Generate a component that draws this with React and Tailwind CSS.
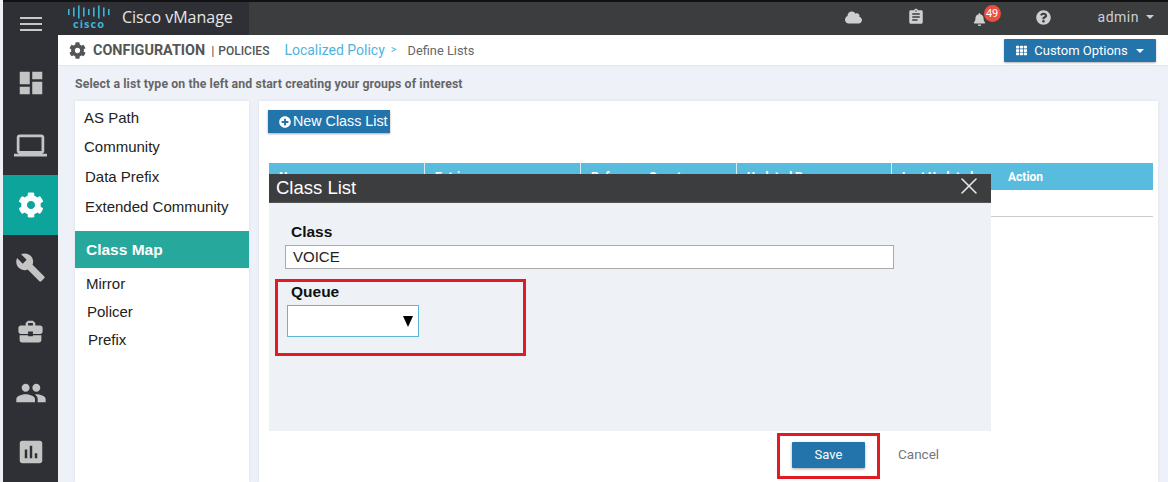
import React from "react";
import { FaCog, FaCloud, FaBell, FaQuestionCircle, FaTh, FaPlusCircle } from "react-icons/fa";
import { MdDashboard, MdLaptop, MdBuild, MdBusinessCenter, MdPeople, MdAssessment, MdAssignment } from "react-icons/md";
import { X } from "lucide-react";

const navItems = [
  { Icon: MdDashboard, h: "h-[58px]", size: 30 },
  { Icon: MdLaptop, h: "h-[63px] pt-[3px]", size: 33 },
  { Icon: FaCog, h: "h-[60px]", size: 26, active: true },
  { Icon: MdBuild, h: "h-[65px]", size: 31 },
  { Icon: MdBusinessCenter, h: "h-[62px]", size: 29 },
  { Icon: MdPeople, h: "h-[61px]", size: 32 },
  { Icon: MdAssessment, h: "h-[59px] pb-[2px]", size: 30 },
];

function CiscoLogo() {
  const bars = [
    [1, 6], [6, 9], [11, 13], [16, 9], [21, 6], [26, 9], [31, 13], [36, 9], [41, 6],
  ];
  return (
    <div className="flex flex-col items-center w-[44px] -mt-[3px]">
      <svg width="44" height="14" viewBox="0 0 44 14">
        {bars.map(([x, h], i) => (
          <rect key={i} x={x} y={(14 - h) / 2} width="1.6" height={h} fill="#3fb3d6" />
        ))}
      </svg>
      <span className="text-[11px] leading-[10px] font-bold tracking-[1px] text-[#3fb3d6] font-['Open_Sans',sans-serif]">cisco</span>
    </div>
  );
}

function ListItem({ children, className }) {
  return <div className={`text-[#222] text-[15px] leading-[18px] ${className}`}>{children}</div>;
}

const columns = [
  ["Name", "w-[156px] border-r border-[#d8eef6]"],
  ["Entries", "w-[156px] border-r border-[#d8eef6]"],
  ["Reference Count", "w-[156px] border-r border-[#d8eef6]"],
  ["Updated By", "w-[155px] border-r border-[#d8eef6]"],
  ["Last Updated", "w-[116px]"],
];

export default function App() {
  return (
    <div className="w-[1168px] h-[482px] overflow-hidden flex bg-[#eef2f8] font-['Liberation_Sans',Arial,sans-serif]">
      <aside className="w-[55px] ml-[3px] shrink-0 bg-[#2f3035] flex flex-col border-t-2 border-[#111]">
        <div className="h-[52px] shrink-0 flex items-center justify-center">
          <div className="flex flex-col gap-[4px] w-[22px] -mt-[8px]">
            <span className="h-[2px] bg-[#c8c8c8]" />
            <span className="h-[2px] bg-[#c8c8c8]" />
            <span className="h-[2px] bg-[#c8c8c8]" />
          </div>
        </div>
        {navItems.map(({ Icon, h, size, active }, i) => (
          <div key={i} className={`${h} shrink-0 flex items-center justify-center ${active ? "bg-[#0da59b] text-white" : "text-[#c4c4c4]"}`}>
            <Icon size={size} />
          </div>
        ))}
      </aside>

      <div className="flex-1 min-w-0 flex flex-col">
        <header className="h-[35px] shrink-0 bg-[#3c3d3f] border-t-2 border-[#111] flex items-center text-[#cfcfcf]">
          <div className="w-[191px] h-full bg-[#2f3035] flex items-center pl-[9px] gap-[11px]">
            <CiscoLogo />
            <span className="text-[16px] leading-[20px] -mt-[4px] text-[#e6e6e6] font-['Open_Sans',sans-serif]">Cisco vManage</span>
          </div>
          <div className="flex-1 flex items-center justify-end pr-[14px] pb-[3px]">
            <FaCloud size={17} className="mr-[45px]" />
            <MdAssignment size={18} className="mr-[48px]" />
            <div className="relative mr-[39px] w-[24px] h-[20px] flex items-center">
              <FaBell size={13} className="mt-[4px]" />
              <span className="absolute left-[11px] -top-[2px] w-[17px] h-[17px] rounded-full bg-[#e8503f] text-white text-[11px] leading-[17px] text-center font-['Roboto',sans-serif]">49</span>
            </div>
            <FaQuestionCircle size={15} className="mr-[47px]" />
            <span className="text-[14px] font-['Roboto',sans-serif] tracking-[0.5px]">admin</span>
            <span className="ml-[7px] w-0 h-0 border-x-[4px] border-x-transparent border-t-[4px] border-t-[#cfcfcf]" />
          </div>
        </header>

        <div className="h-[31px] shrink-0 bg-white border-b border-[#e4e6ea] flex items-center pl-[11px] pr-[12px] pt-[1px] font-['Roboto',sans-serif]">
          <FaCog size={17} className="text-[#555] mr-[7px]" />
          <span className="text-[14.4px] font-bold text-[#555]">CONFIGURATION</span>
          <span className="text-[13px] text-[#555] ml-[6px]">|</span>
          <span className="text-[12px] font-medium text-[#555] ml-[4px]">POLICIES</span>
          <span className="text-[14px] text-[#4fb3dd] ml-[15px]">Localized Policy</span>
          <span className="text-[11px] text-[#4fb3dd] ml-[6px]">&gt;</span>
          <span className="text-[12.8px] text-[#666] ml-[11px]">Define Lists</span>
          <button className="ml-auto w-[152px] h-[23px] bg-[#2274ab] text-white text-[13px] rounded-[1px] shadow-[0_1px_2px_rgba(0,0,0,0.3)] flex items-center justify-center">
            <FaTh size={11} className="mr-[7px]" />
            Custom Options
            <span className="ml-[8px] w-0 h-0 border-x-[4px] border-x-transparent border-t-[4px] border-t-white" />
          </button>
        </div>

        <div className="flex-1 min-h-0 pl-[17px] pr-[10px] flex flex-col">
          <div className="h-[35px] shrink-0 pt-[2px] flex items-center text-[12.3px] font-bold text-[#666] font-['Roboto',sans-serif] tracking-[0.1px]">
            Select a list type on the left and start creating your groups of interest
          </div>
          <div className="flex-1 min-h-0 flex gap-[10px]">
            <nav className="w-[174px] shrink-0 bg-white shadow-[0_0_3px_rgba(0,0,0,0.08)] flex flex-col pt-[8px]">
              <ListItem className="pl-[9px]">AS Path</ListItem>
              <ListItem className="pl-[9px] mt-[11px]">Community</ListItem>
              <ListItem className="pl-[10px] mt-[12px]">Data Prefix</ListItem>
              <ListItem className="pl-[10px] mt-[12px]">Extended Community</ListItem>
              <div className="mt-[15px] h-[37px] bg-[#26a99c] text-white font-bold text-[15.5px] pl-[11px] pt-[1px] flex items-center">Class Map</div>
              <ListItem className="pl-[11px] mt-[7px] text-[14px]">Mirror</ListItem>
              <ListItem className="pl-[12px] mt-[10px] text-[14px]">Policer</ListItem>
              <ListItem className="pl-[13px] mt-[10px] text-[14px]">Prefix</ListItem>
            </nav>

            <main className="relative flex-1 min-w-0 bg-white shadow-[0_0_3px_rgba(0,0,0,0.08)] pt-[9px] pl-[10px] pr-[5px]">
              <button className="w-[122px] h-[23px] ml-[-1px] pl-[11px] bg-[#2274ab] text-white text-[14.3px] shadow-[0_1px_2px_rgba(0,0,0,0.35)] flex items-center">
                <FaPlusCircle size={12} className="mr-[2px]" />
                New Class List
              </button>
              <div className="mt-[30px] h-[27px] bg-[#58bcdf] flex text-white text-[12px] font-bold font-['Roboto',sans-serif]">
                {columns.map(([name, w]) => (
                  <div key={name} className={`${w} pl-[10px] flex items-center`}>{name}</div>
                ))}
                <div className="flex items-center">Action</div>
              </div>
              <div className="h-[27px] border-b border-[#cccccc]" />

              <div className="absolute left-[10px] top-[73px] w-[722px] flex flex-col">
                <div className="h-[29px] bg-[#3c3d3f] border-b border-[#555] flex items-center justify-between pl-[7px] pr-[8px] text-white">
                  <span className="text-[18.5px]">Class List</span>
                  <X size={28} strokeWidth={1.3} className="text-[#e8e8e8] -mt-[4px]" />
                </div>
                <div className="h-[228px] bg-[#eef1f6] pt-[20px] pl-[6px]">
                  <label className="block ml-[16px] text-[15.5px] leading-[18px] font-bold text-[#111]">Class</label>
                  <div className="ml-[10px] mt-[4px] w-[609px] h-[24px] bg-white border border-[#aaaaaa] pl-[7px] flex items-center text-[15px] text-[#222]">VOICE</div>
                  <div className="mt-[10px] w-[251px] h-[77px] border-[3px] border-[#e01b24] pl-[9px] pt-[1px]">
                    <label className="block ml-[4px] text-[15.5px] leading-[18px] font-bold text-[#111]">Queue</label>
                    <div className="mt-[4px] w-[132px] h-[32px] bg-white border border-[#5fb7d4] flex items-center justify-end pr-[5px]">
                      <span className="w-0 h-0 border-x-[5px] border-x-transparent border-t-[11px] border-t-black" />
                    </div>
                  </div>
                </div>
                <div className="flex items-center pl-[508px] mt-[2px]">
                  <div className="w-[103px] h-[46px] border-[3px] border-[#e01b24] flex items-center justify-center">
                    <button className="w-[73px] h-[26px] mb-[3px] bg-[#2274ab] text-white text-[13px] rounded-[1px] shadow-[0_1px_3px_rgba(0,0,0,0.35)] font-['Roboto',sans-serif]">Save</button>
                  </div>
                  <span className="ml-[18px] -mt-[3px] text-[13.5px] text-[#777] font-['Roboto',sans-serif]">Cancel</span>
                </div>
              </div>
            </main>
          </div>
        </div>
      </div>
    </div>
  );
}
